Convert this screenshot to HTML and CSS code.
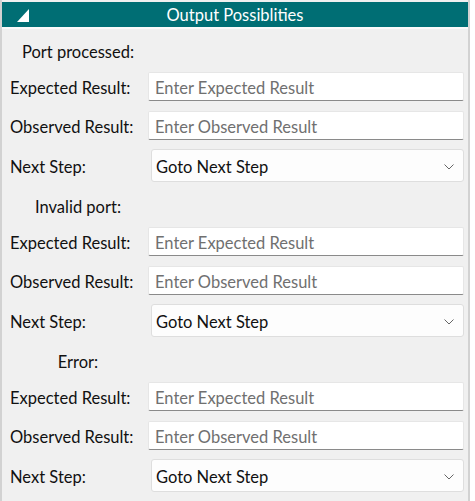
FILE: index.html
```html
<!DOCTYPE html>
<html>
<head>
<meta charset="utf-8">
<link rel="stylesheet" href="styles.css">
</head>
<body>
<div class="panel">
  <div class="header">
    <svg class="tri" width="12" height="13" viewBox="0 0 12 13"><polygon points="12,0 12,13 0,13" fill="#ffffff"/></svg>
    <span class="title">Output Possiblities</span>
    <span></span>
  </div>

  <div class="section">
    <div class="sec-title"><span>Port processed:</span></div>
    <div class="row row-a"><label class="lbl">Expected Result:</label><input class="field" placeholder="Enter Expected Result"></div>
    <div class="row row-b"><label class="lbl">Observed Result:</label><input class="field" placeholder="Enter Observed Result"></div>
    <div class="row row-c"><label class="lbl">Next Step:</label><div class="select"><span>Goto Next Step</span><svg width="10" height="6" viewBox="0 0 10 6"><polyline points="0.5,0.5 5,5 9.5,0.5" fill="none" stroke="#666" stroke-width="1"/></svg></div></div>
  </div>

  <div class="section">
    <div class="sec-title"><span>Invalid port:</span></div>
    <div class="row row-a"><label class="lbl">Expected Result:</label><input class="field" placeholder="Enter Expected Result"></div>
    <div class="row row-b"><label class="lbl">Observed Result:</label><input class="field" placeholder="Enter Observed Result"></div>
    <div class="row row-c"><label class="lbl">Next Step:</label><div class="select"><span>Goto Next Step</span><svg width="10" height="6" viewBox="0 0 10 6"><polyline points="0.5,0.5 5,5 9.5,0.5" fill="none" stroke="#666" stroke-width="1"/></svg></div></div>
  </div>

  <div class="section">
    <div class="sec-title"><span>Error:</span></div>
    <div class="row row-a"><label class="lbl">Expected Result:</label><input class="field" placeholder="Enter Expected Result"></div>
    <div class="row row-b"><label class="lbl">Observed Result:</label><input class="field" placeholder="Enter Observed Result"></div>
    <div class="row row-c"><label class="lbl">Next Step:</label><div class="select"><span>Goto Next Step</span><svg width="10" height="6" viewBox="0 0 10 6"><polyline points="0.5,0.5 5,5 9.5,0.5" fill="none" stroke="#666" stroke-width="1"/></svg></div></div>
  </div>
</div>
</body>
</html>
```

FILE: styles.css
```css
html, body {
  margin: 0;
  padding: 0;
  background: #ffffff;
}
body {
  font-family: "Lato", "Noto Sans", sans-serif;
  font-size: 16.5px;
  color: #111111;
}
.panel {
  box-sizing: border-box;
  width: 470px;
  min-height: 501px;
  background: #f0f0f0;
  border-left: 2px solid #d2d2d2;
  border-right: 2px solid #d2d2d2;
  padding-top: 2px;
}
.header {
  height: 25px;
  background: #006e74;
  color: #ffffff;
  display: grid;
  grid-template-columns: 1fr auto 1fr;
  align-items: center;
  border-bottom: 2px solid #fafafa;
  margin-bottom: 2px;
}
.tri {
  margin-left: 15px;
  margin-top: 1px;
}
.title {
  font-size: 16.5px;
  padding-top: 1px;
}
.section {
  display: flex;
  flex-direction: column;
  padding-bottom: 2px;
}
.sec-title {
  height: 40px;
  width: 152px;
  display: flex;
  align-items: center;
  justify-content: center;
}
.sec-title span {
  padding-top: 2px;
}
.row {
  display: flex;
  align-items: center;
  padding-left: 8px;
}
.row-a { height: 31px; margin-bottom: 8px; }
.row-b { height: 31px; margin-bottom: 6px; }
.row-c { height: 37px; }
.lbl {
  width: 138px;
  flex: none;
  padding-top: 2px;
}
.field {
  box-sizing: border-box;
  width: 316px;
  height: 29px;
  border: 1px solid #e6e6e6;
  border-bottom: 1px solid #8a8a8a;
  border-radius: 2px;
  background: #ffffff;
  font-family: inherit;
  font-size: 16.5px;
  padding: 2px 6px 0;
  outline: none;
  color: #111;
}
.field::placeholder {
  color: #707070;
}
.select {
  box-sizing: border-box;
  margin-left: 3px;
  width: 313px;
  height: 33px;
  border: 1px solid #dedede;
  border-radius: 3px;
  background: #fdfdfd;
  display: flex;
  align-items: center;
  justify-content: space-between;
  padding: 2px 9px 0 4px;
}
```
